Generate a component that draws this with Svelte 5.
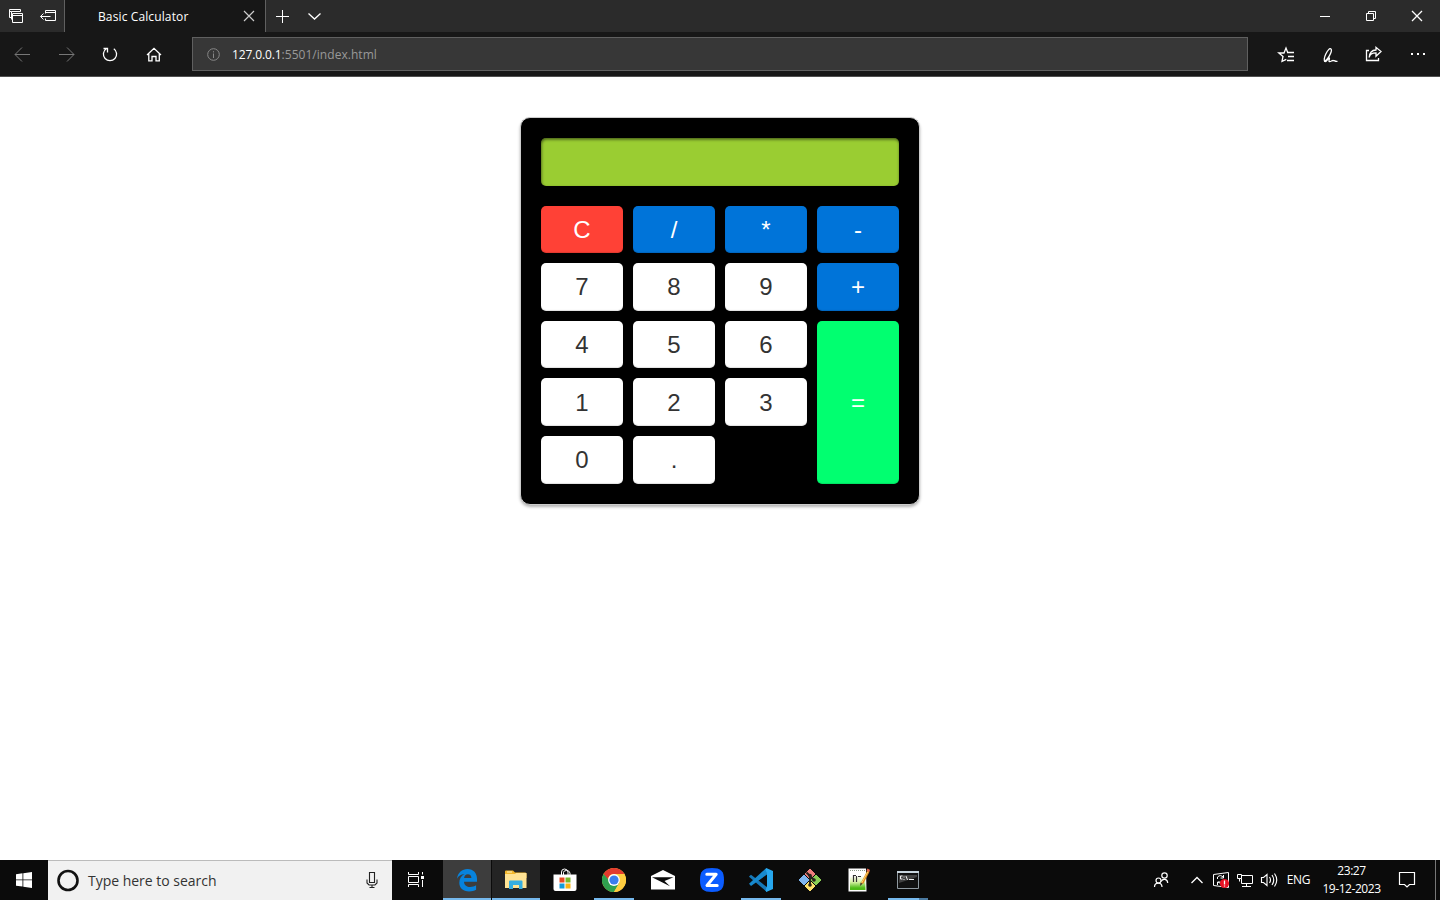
<script>
  const keys = [
    { label: 'C', kind: 'clear' },
    { label: '/', kind: 'op' },
    { label: '*', kind: 'op' },
    { label: '-', kind: 'op' },
    { label: '7' },
    { label: '8' },
    { label: '9' },
    { label: '+', kind: 'op' },
    { label: '4' },
    { label: '5' },
    { label: '6' },
    { label: '=', kind: 'equals' },
    { label: '1' },
    { label: '2' },
    { label: '3' },
    { label: '0' },
    { label: '.' }
  ];
</script>

<div class="screen">
  <header class="tabs">
    <div class="tabtools">
      <svg class="line" width="64" height="32" viewBox="0 0 64 32">
        <path d="M11.500 17.500h-2v-8h11v2M11.500 19.500v-8h9M9.500 11.500h2M12.500 13.500h10v9h-10zM12.500 15.500h10" />
        <path d="M45.500 13.500v-3h10v10h-10v-2M45.500 12.500h10M40.500 16.500h10M43.500 13.500l-3 3 3 3" />
      </svg>
    </div>
    <div class="tab">
      <span class="title">Basic Calculator</span>
      <svg class="line dim" width="12" height="12" viewBox="0 0 12 12"><path d="M1 1l10 10M11 1L1 11" /></svg>
    </div>
    <svg class="line" width="70" height="32" viewBox="266 0 70 32">
      <path d="M276 16.500h13M282.500 10v13" /><path class="heavy" d="M308.500 13.500l6 5.500 6-5.500" />
    </svg>
    <svg class="line controls" width="140" height="32" viewBox="1300 0 140 32">
      <path d="M1320 16.500h10M1366.500 13.500h7v7h-7zM1368.500 13v-1.500h7v7H1374" /><path class="heavy" d="M1412 11l10 10M1422 11l-10 10" />
    </svg>
  </header>

  <nav class="toolbar">
    <svg class="line" width="192" height="44" viewBox="0 32 192 44">
      <g class="faded"><path d="M15 54.500h15M22 47.500l-7 7 7 7M59 54.500h15M67 47.500l7 7-7 7" /></g>
      <path class="heavy" d="M106.200 48.700a6.600 6.600 0 1 0 7.600 0M103.500 48.500h4v4" />
      <path class="heavy" d="M147 55l7-6.700 7 6.700M148.800 54v6.800h3.200v-4.300h4v4.300h3.300V54" />
    </svg>
    <div class="address">
      <svg class="info" width="14" height="14" viewBox="0 0 14 14"><circle cx="7.500" cy="7.500" r="5.800" /><path d="M7.500 6.500v4.500M7.500 4.200v1.200" /></svg>
      <span class="url"><b>127.0.0.1</b>:5501/index.html</span>
    </div>
    <svg class="line actions" width="192" height="44" viewBox="1248 32 192 44">
      <path class="heavy" d="M1286.300 59.300l-4.300 2 1-4.800-4.200-3.500h5.200l2-5 1.700 4.500" />
      <path class="heavy" d="M1287 52.500h7M1288 56.500h6M1287 60.500h7" />
      <path class="heavy" d="M1324 61.500c3-1 8.500-9.500 7.200-12.200-1.200-2-3.800 1.200-5.400 4.800-1.500 3.300-2.300 6.900-.7 7.400 1.800.2 3.800-4.300 4.300-3.600.6.700-1.400 3.800.2 3.800 1.700-.1 2.200-1.400 3.700-1.200 1.700.1 1.600 1.200 4.200.8" />
      <path class="heavy" d="M1369 50.500h-2.500v10h12v-2.500" />
      <path class="heavy" d="M1369.200 57.500c.5-3.300 3-4.700 6.800-4.700v3.400l5-4.700-5-4.200v2.700c-5 .2-6.500 3.200-6.800 7.500z" />
      <g class="dots"><rect x="1411" y="53" width="2" height="2" /><rect x="1417" y="53" width="2" height="2" /><rect x="1423" y="53" width="2" height="2" /></g>
    </svg>
  </nav>

  <main>
    <section class="calculator">
      <div class="display"></div>
      <div class="keys">
        {#each keys as key}
          <button class={key.kind ?? 'digit'}>{key.label}</button>
        {/each}
      </div>
    </section>
  </main>

  <footer>
    <div class="start">
      <svg width="16" height="16" viewBox="0 0 16 16"><path fill="#fff" d="M0 2.200L6.500 1.300v6.200H0zM7.300 1.200L16 0v7.500H7.300zM0 8.300h6.500v6.300L0 13.700zM7.300 8.300H16V16l-8.700-1.200z" /></svg>
    </div>
    <div class="search">
      <svg width="24" height="24" viewBox="0 0 24 24"><circle cx="12" cy="11.500" r="9.500" fill="none" stroke="#111" stroke-width="2.600" /></svg>
      <span>Type here to search</span>
      <svg class="mic" width="12" height="17" viewBox="0 0 12 17"><path d="M3.500 .5h5v10h-5zM1 7.500v3.500l2 2h6l2-2V7.500M6 13v3M3.500 15.500h5" /></svg>
    </div>
    <div class="view">
      <svg class="line" width="18" height="18" viewBox="0 0 18 18"><path d="M1.500 1v2.500h10V1M1.500 5.500h10v6h-10zM1.500 16v-2.500h10V16M15.500 1v2.500M15.500 9v7" /><rect x="14" y="5" width="3" height="3" fill="#fff" stroke="none" /></svg>
    </div>
    <div class="apps">
      <div class="app active wide">
        <svg width="22" height="24" viewBox="0 0 22 24"><path fill="#0783dd" d="M1 10.800C1.900 4.500 6 1 11.500 1 17.500 1 21 5.300 21 10.700v3.100H8c.2 3.700 3 5.200 6.100 5.200 2.400 0 4.200-.7 6-1.700v4.500c-1.900 1-4.200 1.600-6.900 1.600-6.300 0-9.900-3.500-9.900-8.600 0-3.900 1.900-6.900 5.200-8.700C4.700 6.300 2.600 8 1 10.800zM8.100 10h7.300c0-2.500-1.300-3.800-3.500-3.800S8.400 7.600 8.100 10z" /></svg>
      </div>
      <div class="app second wide">
        <svg width="22" height="20" viewBox="0 0 22 20"><path fill="#f3b72b" d="M0 1.500Q0 .5 1 .5h7l2 2h10.500l1 1V8H0z" /><path fill="#ffe394" d="M0 4h10l1-1h10.500v15H0z" /><path fill="#fff5c9" d="M2 1.500h5v1H2z" /><path fill="#36aee0" d="M5.500 10.500h11q1 0 1 1V19H14v-4H8v4H4v-7.500q0-1 1-1z" /></svg>
      </div>
      <div class="app">
        <svg width="24" height="24" viewBox="0 0 24 24"><path fill="none" stroke="#fff" d="M8.500 7V4Q8.500 1 11.500 1T15 4v3M10.500 7V4.500q0-2 3-2T17 5v2" /><path fill="#fff" d="M.5 6.500h23v14.500q0 2-2 2h-19q-2 0-2-2z" /><path fill="#e84a24" d="M6.500 9.500h5v5h-5z" /><path fill="#78b928" d="M12.500 9.500h5v5h-5z" /><path fill="#139bda" d="M6.500 15.500h5v5h-5z" /><path fill="#f9b313" d="M12.500 15.500h5v5h-5z" /></svg>
      </div>
      <div class="app running">
        <svg width="24" height="24" viewBox="0 0 24 24"><circle cx="12" cy="12" r="12" fill="#ffcd40" /><path fill="#e33b2e" d="M1.600 6A12 12 0 0 1 22.400 6H12a6 6 0 0 0-5.300 3.200L5 12z" /><path fill="#2fa14f" d="M1.600 6A12 12 0 0 0 12 24l5.200-9H12a6 6 0 0 1-5.200-3z" /><path fill="#ffcd40" d="M12 24A12 12 0 0 0 22.400 6H12l5.200 9z" /><circle cx="12" cy="12" r="5.900" fill="#fff" /><circle cx="12" cy="12" r="4.600" fill="#3b7ded" /></svg>
      </div>
      <div class="app">
        <svg width="24" height="20" viewBox="0 0 24 20"><path fill="#fff" d="M0 6L12 0l12 6v13.500H0z" /><path fill="#0b0b0b" d="M1 7.200h21.500L13.500 11l5.500 5.200L9 11.200z" /></svg>
      </div>
      <div class="app">
        <svg width="24" height="24" viewBox="0 0 24 24"><path fill="#0b5cff" d="M12 0c9 0 12 3 12 12s-3 12-12 12S0 21 0 12 3 0 12 0z" /><path fill="none" stroke="#fff" stroke-width="3" stroke-linejoin="round" stroke-linecap="round" d="M6.800 6.200h9.400L7 17.500h10.200" /></svg>
      </div>
      <div class="app running">
        <svg width="24" height="24" viewBox="0 0 24 24"><path fill="#1678b8" d="M0 8.500l2-1.800 16 12.500V24L.3 9z" /><path fill="#1789ce" d="M0 15.700L17.300 0 18 6.500 2 18z" /><path fill="#27a7ee" d="M17.300 0L24 3v18l-6.700 3-.8-1.500L18 18V6.500l-1.500-5z" /></svg>
      </div>
      <div class="app">
        <svg width="24" height="24" viewBox="0 0 24 24"><g stroke-linejoin="round" stroke-width="1"><path fill="#f07e7c" stroke="#f07e7c" d="M12 1l5 5-5 5-5-5z" /><path fill="#7fb5ef" stroke="#7fb5ef" d="M6 7l5 5-5 5-5-5z" /><path fill="#8bcf55" stroke="#8bcf55" d="M18 7l5 5-5 5-5-5z" /><path fill="#ffe16b" stroke="#ffe16b" d="M12 13l5 5-5 5-5-5z" /></g><path fill="none" stroke="#27221c" stroke-width="2" d="M8.500 4.500L12 8v9M12 8l4 4" /><circle cx="12" cy="7.500" r="1.800" fill="#27221c" /><circle cx="16" cy="12" r="1.800" fill="#27221c" /><circle cx="12" cy="17" r="1.800" fill="#27221c" /></svg>
      </div>
      <div class="app">
        <svg width="24" height="24" viewBox="0 0 24 24"><defs><linearGradient id="sheet" x2="0" y2="1"><stop offset=".3" stop-color="#fff" /><stop offset=".6" stop-color="#d8f1a5" /><stop offset=".9" stop-color="#4dbb16" /></linearGradient></defs><path fill="#fff" d="M1.500 .5h17.500l.5 23h-18z" /><path fill="url(#sheet)" d="M3 2h15l.5 20H3z" /><path fill="none" stroke="#8a9a88" stroke-dasharray="1 1" d="M3 2.500h15" /><path fill="none" stroke="#333" stroke-width="1.200" d="M6.500 7v7M6 7.500h3M9.500 8v6M11 8.500h3" /><path fill="none" stroke="#dc8b20" stroke-width="2.600" d="M21.500 3L15 15.500" /><path fill="none" stroke="#ffd46b" d="M20.700 4l-6 11" /><path fill="#453528" d="M13.500 14.500l2 1.200-2.500 2.300z" /><path fill="#e86650" d="M20.500 .5l2.500 1.500-1 2-2.500-1.500z" /></svg>
      </div>
      <div class="app running grouped">
        <svg width="24" height="20" viewBox="0 0 24 20"><path fill="#111" stroke="#8e989f" d="M1.500 1.500h21v17h-21z" /><path fill="#c7d3dc" d="M1 1h22v2H1z" /><path fill="#414141" d="M3 5h18v2L3 13z" /><path fill="none" stroke="#eee" d="M6.500 6H4.500v3h2M8 6.500v1M8 9v1M10 6l1.500 4M13 9.500h5" /></svg>
      </div>
    </div>
    <svg class="line tray" width="138" height="40" viewBox="1145 860 138 40">
      <g stroke-width="1.200"><circle cx="1158.500" cy="880.500" r="2.500" /><circle cx="1164.500" cy="875.500" r="2.700" /><path d="M1154.500 887c0-5.300 7.500-5.300 7.500 0M1161 881.500c2-3.500 6.500-2.500 6.700 1.500" /></g>
      <path stroke-width="1.300" d="M1191.500 883l5.500-5.500 5.500 5.500" />
      <path d="M1213.500 874.500l15-2v15l-15-2zM1217.500 879v-2q3-3 6 .5M1223.500 875v3h-3M1224 881q-2 4-6 1M1217.500 885v-3h3" />
      <circle cx="1224.500" cy="883.500" r="4.600" fill="#e81123" stroke="none" /><path d="M1224.500 880.500v4M1224.500 885.500v1" stroke-width="1.300" />
      <path d="M1241.500 875.500h11v8h-11v-5M1246.500 883.500v3M1242 886.500h9M1237.500 874.500h4v4h-4zM1239.500 878.500v3" />
      <path stroke-width="1.150" d="M1261.500 877.500h2l3.500-3v11l-3.500-3h-2zM1269.500 877q2 3 0 6M1272 875q3.500 5 0 10M1274.500 873.500q4.500 6.500 0 13" />
    </svg>
    <span class="lang">ENG</span>
    <div class="clock"><span>23:27</span><span class="date">19-12-2023</span></div>
    <svg class="line note" width="46" height="40" viewBox="1389 860 46 40"><path stroke-width="1.200" d="M1399.500 872.500h15v12h-5l-2.500 2.500-2.500-2.500h-5z" /></svg>
    <div class="peek"></div>
  </footer>
</div>

<style>
  :global(body) { margin: 0; background: #fff; }
  .screen { width: 1440px; height: 900px; display: flex; flex-direction: column; overflow: hidden; font-family: "Open Sans", "Noto Sans", sans-serif; }
  svg { flex: none; display: block; }
  .line { fill: none; stroke: #fff; stroke-width: 1; }
  .dim { stroke: #ccc; stroke-width: 1.2; }
  .tabs { height: 32px; flex: none; display: flex; background: #2b2b2b; }
  .tabtools { width: 64px; border-right: 1px solid #606060; }
  .tab { width: 201px; display: flex; align-items: center; justify-content: space-between; box-sizing: border-box; padding: 0 10px 0 33px; background: #171717; border-right: 1px solid #606060; color: #fff; }
  .title { font-size: 12px; letter-spacing: 0.12px; white-space: nowrap; }
  .controls, .actions { margin-left: auto; }
  .toolbar { height: 44px; flex: none; display: flex; background: #171717; border-bottom: 1px solid #505050; }
  .faded { stroke: #777; }
  .heavy { stroke-width: 1.3; }
  .dots { fill: #fff; stroke: none; }
  .address { box-sizing: border-box; width: 1056px; height: 34px; margin-top: 5px; padding-left: 13px; border: 1px solid #606060; background: #373737; display: flex; align-items: center; gap: 12px; }
  .info { fill: none; stroke: #888; stroke-width: 1; }
  .url { color: #999; font-size: 12px; letter-spacing: 0.04px; }
  .url b { color: #fff; font-weight: 400; letter-spacing: -0.12px; }
  main { flex: 1; min-height: 0; background: #fff; }
  .calculator { box-sizing: border-box; width: 400px; height: 387.600px; margin: 40px auto 0; padding: 20px; border: 1px solid #ccc; border-radius: 10px; background: #000; box-shadow: 0 2px 3px rgba(0, 0, 0, .3); }
  .display { height: 47.600px; border-radius: 5px; background: #9acd32; box-shadow: inset 0.500px 1.500px 3px rgba(0, 0, 0, .55); margin-bottom: 20px; }
  .keys { display: grid; grid-template-columns: repeat(4, 82px); grid-auto-rows: 47.600px; gap: 10px; }
  button { border: 0; border-radius: 5px; padding: 0.800px 0 0; font: 24px "Liberation Sans", Arial, sans-serif; color: #fff; box-shadow: inset 0 -1px 1px rgba(0, 0, 0, .12); }
  .digit { background: #fff; color: #333; }
  .op { background: #0074d9; }
  .clear { background: #ff4136; }
  .equals { background: #01ff70; grid-column: 4; grid-row: 3 / 6; }
  footer { height: 40px; flex: none; display: flex; background: #0b0b0b; color: #fff; }
  .start, .view, .app { width: 48px; display: flex; align-items: center; justify-content: center; }
  .search { box-sizing: border-box; width: 344px; height: 40px; border-top: 1px solid #bbb; background: #f1f1f1; display: flex; align-items: center; padding: 0 14px 0 8px; color: #333; font-size: 14px; letter-spacing: -0.02px; }
  .search span { margin-left: 8px; }
  .mic { margin-left: auto; fill: none; stroke: #222; stroke-width: 1.1; }
  .apps { display: flex; gap: 1px; margin-left: 3px; }
  .app { height: 40px; box-sizing: border-box; }
  .active { background: #3d3d3d; }
  .second { background: #242424; }
  .wide { box-shadow: inset 0 -2px #76b9ed; }
  .running { background: linear-gradient(#76b9ed, #76b9ed) 4px 38px / 40px 2px no-repeat; }
  .grouped { background: linear-gradient(90deg, #76b9ed 31px, #4b7aa0 31px) 4px 38px / 40px 2px no-repeat; }
  .tray { margin-left: auto; }
  .lang { width: 31px; text-align: center; line-height: 40px; font-size: 12px; letter-spacing: -0.35px; }
  .clock { width: 75px; display: flex; flex-direction: column; align-items: center; padding-top: 2px; box-sizing: border-box; font-size: 12px; line-height: 18px; letter-spacing: -0.45px; }
  .date { white-space: nowrap; }
  .peek { width: 4px; border-left: 1px solid #777; }
</style>
